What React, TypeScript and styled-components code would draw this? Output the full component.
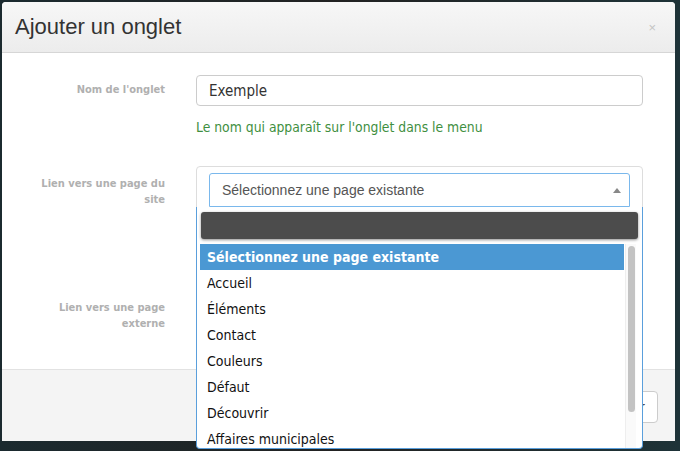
import React from 'react';
import styled, { createGlobalStyle } from 'styled-components';

const GlobalStyle = createGlobalStyle`
  html, body {
    margin: 0;
    padding: 0;
    background: #1d2326;
  }
`;

const Page = styled.div`
  width: 680px;
  height: 451px;
  overflow: hidden;
  padding: 2px 5px 0 2px;
  box-sizing: border-box;
  background: linear-gradient(90deg, #1b2a2f 0%, #222 50%, #1e3338 100%);
`;

const Modal = styled.div`
  width: 673px;
  background: #fff;
  border-radius: 4px 4px 0 0;
  display: flex;
  flex-direction: column;
`;

const Header = styled.div`
  height: 51px;
  box-sizing: border-box;
  padding: 0 19px 0 13px;
  display: flex;
  align-items: center;
  justify-content: space-between;
  background: linear-gradient(#f7f7f7, #ececec);
  border-bottom: 1px solid #d6d6d6;
  border-radius: 4px 4px 0 0;
`;

const Title = styled.h4`
  margin: 0;
  font: 22px/1 'Liberation Sans', Arial, sans-serif;
  color: #333;
`;

const Close = styled.span`
  font: 13px/1 'Liberation Sans', Arial, sans-serif;
  color: #c4c4c4;
`;

const Body = styled.div`
  height: 316px;
  box-sizing: border-box;
  padding: 22px 32px 0 0;
  display: flex;
  flex-direction: column;
`;

const Row = styled.div<{ $mb: number }>`
  display: grid;
  grid-template-columns: 163px 1fr;
  column-gap: 31px;
  margin-bottom: ${p => p.$mb}px;
`;

const Label = styled.label<{ $pt: number }>`
  padding: ${p => p.$pt}px 0 0 38px;
  text-align: right;
  font: bold 11px/16px 'DejaVu Sans Condensed', 'DejaVu Sans', sans-serif;
  color: #b0b0b0;
`;

const Field = styled.div`
  position: relative;
`;

const Input = styled.div`
  height: 31px;
  box-sizing: border-box;
  border: 1px solid #ccc;
  border-radius: 4px;
  padding: 0 12px;
  display: flex;
  align-items: center;
  font: 15px 'DejaVu Sans Condensed', 'DejaVu Sans', sans-serif;
  color: #333;
`;

const Help = styled.div`
  margin-top: 13px;
  font: 13.8px/16px 'DejaVu Sans Condensed', 'DejaVu Sans', sans-serif;
  color: #3f8f3f;
`;

const SelectWrap = styled.div`
  height: 60px;
  box-sizing: border-box;
  border: 1px solid #ddd;
  border-radius: 4px;
  padding: 6px 12px 0 12px;
`;

const Choice = styled.div`
  height: 34px;
  box-sizing: border-box;
  border: 1px solid #7ab8ec;
  border-radius: 3px 3px 0 0;
  padding: 0 8px 0 12px;
  display: flex;
  align-items: center;
  justify-content: space-between;
  font: 14px 'Liberation Sans', Arial, sans-serif;
  color: #555;
`;

const Arrow = styled.span`
  width: 0;
  height: 0;
  border-left: 4px solid transparent;
  border-right: 4px solid transparent;
  border-bottom: 5px solid #888;
`;

const Dropdown = styled.div`
  position: absolute;
  left: 0;
  top: 41px;
  width: 447px;
  height: 242px;
  box-sizing: border-box;
  border: 1px solid #5a9fdc;
  border-top: none;
  border-radius: 0 0 4px 4px;
  background: #fff;
  display: flex;
  flex-direction: column;
  z-index: 5;
  overflow: hidden;
`;

const Search = styled.div`
  margin: 5px 4px 5px 4px;
  height: 27px;
  flex: none;
  border-radius: 3px;
  background: #4c4c4c;
  box-shadow: 0 1px 3px rgba(0, 0, 0, 0.45);
`;

const Results = styled.div`
  display: flex;
  flex: 1;
  padding-left: 3px;
  min-height: 0;
`;

const List = styled.ul`
  list-style: none;
  margin: 0;
  padding: 0;
  width: 424px;
`;

const Option = styled.li<{ $active?: boolean }>`
  height: 26px;
  box-sizing: border-box;
  padding: 0 7px;
  display: flex;
  align-items: center;
  font: ${p => (p.$active ? 'bold ' : '')}14px 'DejaVu Sans Condensed', 'DejaVu Sans', sans-serif;
  color: ${p => (p.$active ? '#fff' : '#111')};
  background: ${p => (p.$active ? '#4b98d3' : 'transparent')};
`;

const Scrollbar = styled.div`
  width: 11px;
  margin-left: 1px;
  background: #fafafa;
  border-left: 1px solid #eee;
  padding-top: 2px;
  box-sizing: border-box;
`;

const Thumb = styled.div`
  margin-left: 2px;
  width: 7px;
  height: 166px;
  border-radius: 4px;
  background: #c3c3c3;
`;

const Footer = styled.div`
  height: 72px;
  box-sizing: border-box;
  border-top: 1px solid #e2e2e2;
  background: #f4f4f4;
  display: flex;
  align-items: center;
  justify-content: flex-end;
  padding: 0 17px 0 0;
`;

const Button = styled.button`
  height: 32px;
  padding: 0 12px;
  background: #fff;
  border: 1px solid #ccc;
  border-radius: 4px;
  font: 14px 'Liberation Sans', Arial, sans-serif;
  color: #333;
  margin-top: 3px;
`;

const pages = ['Accueil', 'Éléments', 'Contact', 'Couleurs', 'Défaut', 'Découvrir', 'Affaires municipales', 'Loisirs'];

export default function App() {
  return (
    <Page>
      <GlobalStyle />
      <Modal>
        <Header>
          <Title>Ajouter un onglet</Title>
          <Close>×</Close>
        </Header>
        <Body>
          <Row $mb={31}>
            <Label $pt={7}>Nom de l'onglet</Label>
            <Field>
              <Input>Exemple</Input>
              <Help>Le nom qui apparaît sur l'onglet dans le menu</Help>
            </Field>
          </Row>
          <Row $mb={74}>
            <Label $pt={10}>Lien vers une page du site</Label>
            <Field>
              <SelectWrap>
                <Choice>
                  Sélectionnez une page existante
                  <Arrow />
                </Choice>
              </SelectWrap>
              <Dropdown>
                <Search />
                <Results>
                  <List>
                    <Option $active>Sélectionnez une page existante</Option>
                    {pages.map(p => (
                      <Option key={p}>{p}</Option>
                    ))}
                  </List>
                  <Scrollbar>
                    <Thumb />
                  </Scrollbar>
                </Results>
              </Dropdown>
            </Field>
          </Row>
          <Row $mb={0}>
            <Label $pt={0}>Lien vers une page externe</Label>
            <Field />
          </Row>
        </Body>
        <Footer>
          <Button>Ajouter</Button>
        </Footer>
      </Modal>
    </Page>
  );
}
